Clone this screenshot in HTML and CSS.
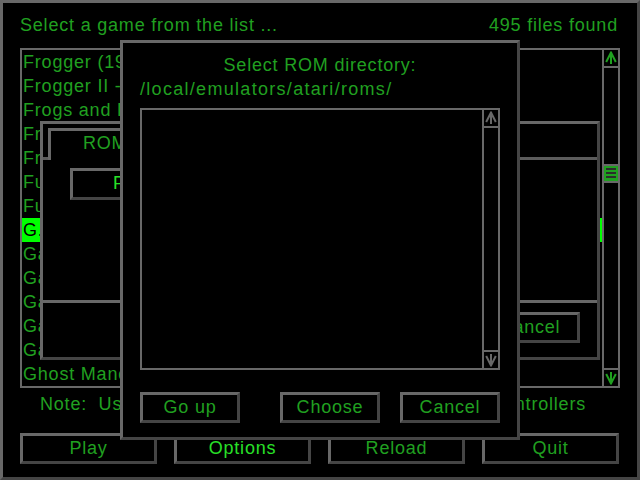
FILE: index.html
```html
<!DOCTYPE html>
<html>
<head>
<meta charset="utf-8">
<title>Stella Launcher</title>
<link rel="stylesheet" href="styles.css">
</head>
<body>
<div class="screen">

  <div class="dlg launcher">
    <div class="header"><span>Select a game from the list ...</span><span>495 files found</span></div>
    <div class="listbox main-list">
      <ul class="rows">
        <li>Frogger (1983) (Parker Bros)</li>
        <li>Frogger II - Threeedeep! (1984) (Parker Bros)</li>
        <li>Frogs and Flies (1982) (M Network)</li>
        <li>Front Line (1984) (Coleco)</li>
        <li>Frostbite (1983) (Activision)</li>
        <li>Fun with Numbers (1980) (Atari)</li>
        <li>Funky Fish (Atari)</li>
        <li class="sel">G.I. Joe - Cobra Strike (1983) (Parker Bros)</li>
        <li>Galaxian (1983) (Atari)</li>
        <li>Gamma-Attack (1983) (Gammation)</li>
        <li>Gangster Alley (1982) (Spectravision)</li>
        <li>Garfield (1984) (Atari)</li>
        <li>Gas Hog (1983) (Spectravision)</li>
        <li>Ghost Manor (1983) (Xonox)</li>
      </ul>
      <div class="scrollbar">
        <div class="arrow up"><svg width="14" height="16" viewBox="0 0 14 16"><path d="M7 1.5V14M7 2.5L2.2 12M7 2.5L11.8 12" fill="none" stroke="currentColor" stroke-width="2"/></svg></div>
        <div class="track"><div class="thumb"><i></i><i></i><i></i></div></div>
        <div class="arrow down"><svg width="14" height="16" viewBox="0 0 14 16"><path d="M7 2V14.5M7 13.5L2.2 4M7 13.5L11.8 4" fill="none" stroke="currentColor" stroke-width="2"/></svg></div>
      </div>
    </div>
    <div class="note"><span>Note:  Use the Options dialog to</span><span>set up controllers</span></div>
    <div class="button-row main-buttons">
      <div class="btn">Play</div>
      <div class="btn hi">Options</div>
      <div class="btn">Reload</div>
      <div class="btn">Quit</div>
    </div>
  </div>

  <div class="dlg config">
    <div class="tabbar">
      <div class="tab-lead"></div>
      <div class="tab">ROM Settings</div>
      <div class="tab-fill"></div>
    </div>
    <div class="tabbody">
      <div class="btn path-btn hi">Path...</div>
    </div>
    <div class="button-row config-buttons">
      <div class="btn">OK</div>
      <div class="btn">Cancel</div>
    </div>
  </div>

  <div class="dlg browser">
    <div class="b-title">Select ROM directory:</div>
    <div class="b-path">/local/emulators/atari/roms/</div>
    <div class="listbox file-list">
      <ul class="rows"></ul>
      <div class="scrollbar">
        <div class="arrow up off"><svg width="14" height="16" viewBox="0 0 14 16"><path d="M7 1.5V14M7 2.5L2.2 12M7 2.5L11.8 12" fill="none" stroke="currentColor" stroke-width="2"/></svg></div>
        <div class="track"></div>
        <div class="arrow down off"><svg width="14" height="16" viewBox="0 0 14 16"><path d="M7 2V14.5M7 13.5L2.2 4M7 13.5L11.8 4" fill="none" stroke="currentColor" stroke-width="2"/></svg></div>
      </div>
    </div>
    <div class="button-row browser-buttons">
      <div class="btn">Go up</div>
      <div class="btn push">Choose</div>
      <div class="btn spaced">Cancel</div>
    </div>
  </div>

</div>
</body>
</html>
```

FILE: styles.css
```css
* { box-sizing: border-box; }
html, body { margin: 0; padding: 0; background: #000; }
body {
  font-family: "Liberation Sans", Arial, sans-serif;
  font-size: 18px;
  letter-spacing: 0.8px;
  line-height: 24px;
  color: #20a020;
}
.screen { position: relative; width: 640px; height: 480px; overflow: hidden; background: #000; }

.dlg {
  background: #000;
  border: 3px solid;
  border-color: #686868 #454545 #454545 #686868;
  display: flex;
  flex-direction: column;
}
.launcher { width: 640px; height: 480px; }

.header {
  display: flex;
  justify-content: space-between;
  margin: 10px 19px 0 17px;
  height: 24px;
  white-space: pre;
}

.listbox { display: flex; border: 2px solid #686868; flex: none; }
.main-list { margin: 11px 0 0 17px; width: 600px; height: 340px; }

.rows { flex: 1; margin: 0; padding: 0; list-style: none; overflow: hidden; }
.rows li { height: 24px; padding-left: 1px; white-space: nowrap; overflow: hidden; }
.rows li.sel { background: #00ff00; color: #000; }

.scrollbar { width: 16px; border-left: 2px solid #686868; display: flex; flex-direction: column; }
.arrow { height: 18px; flex: none; color: #20a020; }
.arrow svg { display: block; }
.arrow.up { border-bottom: 2px solid #686868; }
.arrow.down { border-top: 2px solid #686868; }
.arrow.off { color: #686868; }
.track { flex: 1; }
.thumb {
  margin-top: 96px;
  height: 19px;
  border-top: 2px solid #686868;
  border-bottom: 2px solid #686868;
  background: #20a020;
  display: flex;
  flex-direction: column;
  gap: 2px;
  padding: 2px 2px 0;
}
.thumb i { height: 2px; background: #2c2c2c; flex: none; }

.note {
  display: flex;
  justify-content: space-between;
  margin: 4px 51px 0 37px;
  height: 24px;
  white-space: pre;
}

.button-row { display: flex; flex: none; }
.main-buttons { margin: 17px 0 0 17px; gap: 17px; }
.main-buttons .btn { width: 137px; }

.btn {
  height: 31px;
  border: 3px solid;
  border-color: #686868 #454545 #454545 #686868;
  text-align: center;
  line-height: 25px;
  white-space: nowrap;
  overflow: hidden;
  flex: none;
}
.hi { color: #28e028; }

/* middle (config) dialog */
.config { position: absolute; left: 40px; top: 121px; width: 560px; height: 239px; }
.tabbar { display: flex; align-items: flex-end; height: 36px; flex: none; }
.tab-lead { width: 5px; border-bottom: 3px solid #5c5c5c; }
.tab {
  width: 200px;
  height: 32px;
  border: 3px solid;
  border-bottom: none;
  border-color: #686868 #454545 transparent #686868;
  padding-left: 32px;
  white-space: nowrap;
}
.tab-fill { flex: 1; border-bottom: 3px solid #5c5c5c; }
.tabbody { height: 143px; flex: none; border-bottom: 3px solid #686868; padding: 8px 0 0 27px; }
.path-btn { width: 160px; height: 32px; text-align: left; padding-left: 40px; }
.config-buttons { justify-content: flex-end; gap: 20px; padding: 9px 17px 0 0; }
.config-buttons .btn { width: 100px; }

/* front (file browser) dialog */
.browser { position: absolute; left: 120px; top: 40px; width: 400px; height: 400px; padding: 10px 17px 0; }
.b-title { text-align: center; height: 24px; flex: none; }
.b-path { height: 24px; white-space: nowrap; flex: none; letter-spacing: 1.3px; }
.file-list { margin-top: 7px; width: 360px; height: 262px; }
.browser-buttons { margin-top: 22px; }
.browser-buttons .btn { width: 100px; }
.push { margin-left: auto; }
.spaced { margin-left: 20px; }
```
